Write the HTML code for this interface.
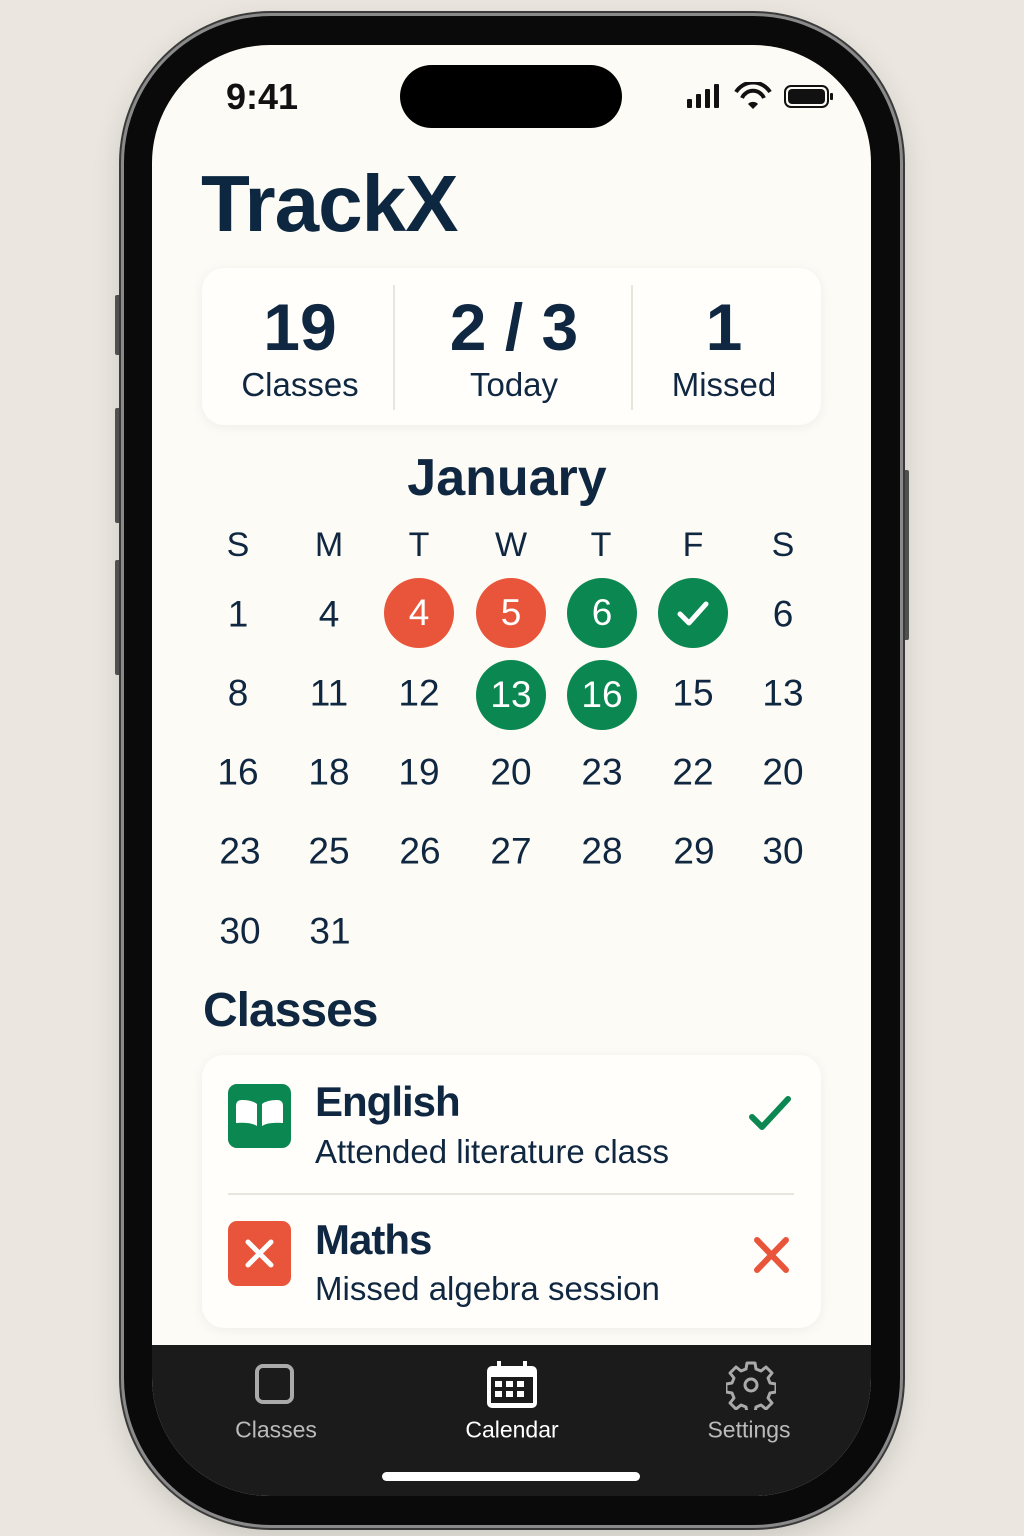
<!DOCTYPE html>
<html><head><meta charset="utf-8"><style>
*{margin:0;padding:0;box-sizing:border-box}
body{width:1024px;height:1536px;background:#ebe7e0;font-family:"Liberation Sans",sans-serif;position:relative;overflow:hidden;color:#0f2740}
.abs{position:absolute}
.frame{left:121px;top:13px;width:782px;height:1515px;border-radius:150px;background:#0a0a0a;border:3px solid #8a8a8a;box-shadow:0 0 0 2px #3a3a3a,0 10px 30px rgba(0,0,0,.15)}
.screen{left:152px;top:45px;width:719px;height:1451px;border-radius:118px;background:#fdfbf5;overflow:hidden}
.btn{background:#555;width:6px;border-radius:2px}
.card{background:#fffefb;border-radius:22px;box-shadow:0 2px 12px rgba(0,0,0,.06)}
.c{text-align:center;transform:translate(-50%,-50%)}
.day{font-size:37px;color:#0f2740;width:80px;text-align:center;transform:translate(-50%,-50%);line-height:1}
.circ{width:70px;height:70px;border-radius:50%;transform:translate(-50%,-50%);color:#fff;font-size:37px;display:flex;align-items:center;justify-content:center}
.r{background:#e9553a}.g{background:#0b8751}
</style></head><body>
<div class="abs btn" style="left:115px;top:295px;height:60px"></div>
<div class="abs btn" style="left:115px;top:408px;height:115px"></div>
<div class="abs btn" style="left:115px;top:560px;height:115px"></div>
<div class="abs btn" style="left:903px;top:470px;height:170px"></div>
<div class="abs frame"></div>
<div class="abs screen">
</div>
<div class="abs" style="left:400px;top:65px;width:222px;height:63px;border-radius:32px;background:#000"></div>
<div class="abs" style="left:226px;top:76px;font-size:36px;font-weight:bold;color:#111">9:41</div>
<svg class="abs" style="left:686px;top:82px" width="150" height="30" viewBox="0 0 150 30">
<rect x="1" y="17" width="5" height="9" rx="1" fill="#111"/><rect x="10" y="12" width="5" height="14" rx="1" fill="#111"/><rect x="19" y="7" width="5" height="19" rx="1" fill="#111"/><rect x="28" y="2" width="5" height="24" rx="1" fill="#111"/>
<path d="M50 10 a20 20 0 0 1 34 0" stroke="#111" stroke-width="4" fill="none"/><path d="M56 16 a12 12 0 0 1 22 0" stroke="#111" stroke-width="4" fill="none"/><path d="M62 22 l5 5 l5 -5 a7 7 0 0 0 -10 0z" fill="#111"/>
<rect x="99" y="4" width="43" height="21" rx="6" fill="none" stroke="#111" stroke-width="2"/><rect x="102" y="7" width="37" height="15" rx="4" fill="#111"/><rect x="144" y="11" width="3" height="7" rx="1" fill="#111"/>
</svg>
<div class="abs" style="left:201px;top:158px;font-size:80px;font-weight:bold;letter-spacing:-1px;color:#0d2740">TrackX</div>
<div class="abs card" style="left:202px;top:268px;width:619px;height:157px"></div>
<div class="abs" style="left:393px;top:285px;width:2px;height:125px;background:#e8e5dd"></div>
<div class="abs" style="left:631px;top:285px;width:2px;height:125px;background:#e8e5dd"></div>
<div class="abs c" style="left:300px;top:327px;font-size:66px;font-weight:bold">19</div>
<div class="abs c" style="left:514px;top:327px;font-size:66px;font-weight:bold">2 / 3</div>
<div class="abs c" style="left:724px;top:327px;font-size:66px;font-weight:bold">1</div>
<div class="abs c" style="left:300px;top:385px;font-size:33px">Classes</div>
<div class="abs c" style="left:514px;top:385px;font-size:33px">Today</div>
<div class="abs c" style="left:724px;top:385px;font-size:33px">Missed</div>
<div class="abs c" style="left:507px;top:478px;font-size:52px;font-weight:bold">January</div>
<div class="abs day" style="left:238px;top:545px;font-size:34px">S</div>
<div class="abs day" style="left:329px;top:545px;font-size:34px">M</div>
<div class="abs day" style="left:419px;top:545px;font-size:34px">T</div>
<div class="abs day" style="left:511px;top:545px;font-size:34px">W</div>
<div class="abs day" style="left:601px;top:545px;font-size:34px">T</div>
<div class="abs day" style="left:693px;top:545px;font-size:34px">F</div>
<div class="abs day" style="left:783px;top:545px;font-size:34px">S</div>
<div class="abs day" style="left:238px;top:614px">1</div>
<div class="abs day" style="left:329px;top:614px">4</div>
<div class="abs circ r" style="left:419px;top:613px">4</div>
<div class="abs circ r" style="left:511px;top:613px">5</div>
<div class="abs circ g" style="left:602px;top:613px">6</div>
<div class="abs circ g" style="left:693px;top:613px"><svg width="40" height="40" viewBox="0 0 40 40"><path d="M7 21 l9 9 l17 -19" stroke="#fff" stroke-width="5" fill="none" stroke-linecap="round" stroke-linejoin="round"/></svg></div>
<div class="abs day" style="left:783px;top:614px">6</div>
<div class="abs day" style="left:238px;top:693px">8</div>
<div class="abs day" style="left:329px;top:693px">11</div>
<div class="abs day" style="left:419px;top:693px">12</div>
<div class="abs circ g" style="left:511px;top:695px">13</div>
<div class="abs circ g" style="left:602px;top:695px">16</div>
<div class="abs day" style="left:693px;top:693px">15</div>
<div class="abs day" style="left:783px;top:693px">13</div>
<div class="abs day" style="left:238px;top:772px">16</div><div class="abs day" style="left:329px;top:772px">18</div><div class="abs day" style="left:419px;top:772px">19</div><div class="abs day" style="left:511px;top:772px">20</div><div class="abs day" style="left:602px;top:772px">23</div><div class="abs day" style="left:693px;top:772px">22</div><div class="abs day" style="left:783px;top:772px">20</div>
<div class="abs day" style="left:240px;top:851px">23</div><div class="abs day" style="left:329px;top:851px">25</div><div class="abs day" style="left:420px;top:851px">26</div><div class="abs day" style="left:511px;top:851px">27</div><div class="abs day" style="left:602px;top:851px">28</div><div class="abs day" style="left:694px;top:851px">29</div><div class="abs day" style="left:783px;top:851px">30</div>
<div class="abs day" style="left:240px;top:931px">30</div><div class="abs day" style="left:330px;top:931px">31</div>
<div class="abs" style="left:203px;top:983px;font-size:48px;font-weight:bold;letter-spacing:-1px">Classes</div>
<div class="abs card" style="left:202px;top:1055px;width:619px;height:273px"></div>
<div class="abs" style="left:228px;top:1084px;width:63px;height:64px;border-radius:9px;background:#0b8751"></div>
<svg class="abs" style="left:228px;top:1084px" width="63" height="64" viewBox="0 0 63 64"><path d="M8 22 q0-6 6-6 q10 0 15 4 v22 q-6-4-21-3z M55 22 q0-6-6-6 q-10 0-15 4 v22 q6-4 21-3z" fill="#fff"/></svg>
<div class="abs" style="left:228px;top:1221px;width:63px;height:65px;border-radius:9px;background:#e9553a"></div>
<svg class="abs" style="left:228px;top:1221px" width="63" height="65" viewBox="0 0 63 65"><path d="M20 21 l23 23 M43 21 l-23 23" stroke="#fff" stroke-width="5" stroke-linecap="round"/></svg>
<div class="abs" style="left:315px;top:1078px;font-size:42px;font-weight:bold;letter-spacing:-1px">English</div>
<div class="abs" style="left:315px;top:1133px;font-size:33px;letter-spacing:0">Attended literature class</div>
<div class="abs" style="left:228px;top:1193px;width:566px;height:2px;background:#e8e5dd"></div>
<div class="abs" style="left:315px;top:1216px;font-size:42px;font-weight:bold;letter-spacing:-1px">Maths</div>
<div class="abs" style="left:315px;top:1270px;font-size:33px;letter-spacing:0">Missed algebra session</div>
<svg class="abs" style="left:745px;top:1095px" width="50" height="40" viewBox="0 0 50 40"><path d="M7 22 l10 10 l26 -28" stroke="#0b8751" stroke-width="6" fill="none" stroke-linecap="round" stroke-linejoin="round"/></svg>
<svg class="abs" style="left:750px;top:1235px" width="44" height="40" viewBox="0 0 44 40"><path d="M7 5 l29 30 M36 5 l-29 30" stroke="#e9553a" stroke-width="6" stroke-linecap="round"/></svg>
<div class="abs" style="left:152px;top:1345px;width:719px;height:151px;background:#1b1b1b;border-radius:0 0 118px 118px"></div>
<div class="abs" style="left:255px;top:1364px;width:39px;height:40px;border:4px solid #aaa;border-radius:8px"></div>
<svg class="abs" style="left:485px;top:1360px" width="54" height="50" viewBox="0 0 54 50"><rect x="2" y="6" width="50" height="42" rx="5" fill="#fff"/><rect x="6" y="17" width="42" height="26" fill="#1b1b1b"/><rect x="12" y="1" width="4" height="9" fill="#fff"/><rect x="38" y="1" width="4" height="9" fill="#fff"/><g fill="#fff"><rect x="10" y="21" width="7" height="6"/><rect x="21" y="21" width="7" height="6"/><rect x="32" y="21" width="7" height="6"/><rect x="10" y="31" width="7" height="6"/><rect x="21" y="31" width="7" height="6"/><rect x="32" y="31" width="7" height="6"/></g></svg>
<svg class="abs" style="left:726px;top:1360px" width="50" height="50" viewBox="0 0 50 50"><path d="M21 3h8l1 6 5 2 5-4 6 6-4 5 2 5 6 1v8l-6 1-2 5 4 5-6 6-5-4-5 2-1 6h-8l-1-6-5-2-5 4-6-6 4-5-2-5-6-1v-8l6-1 2-5-4-5 6-6 5 4 5-2z" fill="none" stroke="#aaa" stroke-width="3" stroke-linejoin="round"/><circle cx="25" cy="25" r="6" fill="none" stroke="#aaa" stroke-width="3"/></svg>
<div class="abs c" style="left:276px;top:1430px;font-size:23px;color:#bbb">Classes</div>
<div class="abs c" style="left:512px;top:1430px;font-size:23px;color:#fff">Calendar</div>
<div class="abs c" style="left:749px;top:1430px;font-size:23px;color:#bbb">Settings</div>
<div class="abs" style="left:382px;top:1472px;width:258px;height:9px;border-radius:5px;background:#fff"></div>
</body></html>
